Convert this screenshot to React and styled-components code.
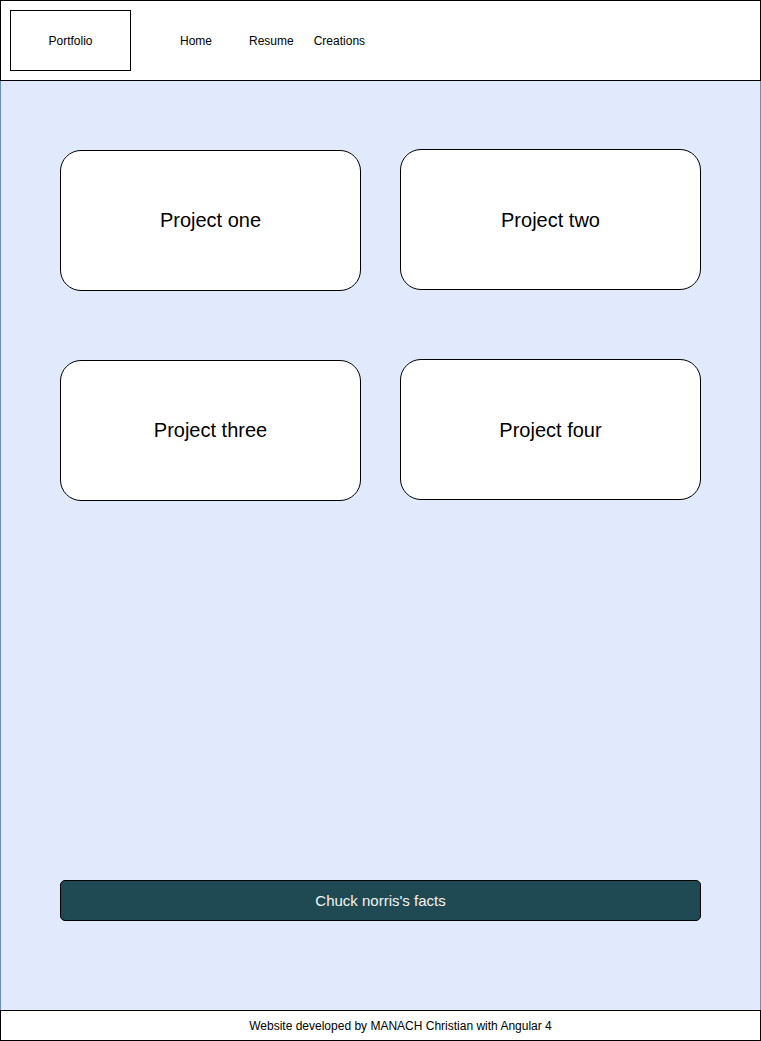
import React from 'react';
import styled, { createGlobalStyle } from 'styled-components';

const GlobalStyle = createGlobalStyle`
  html, body {
    margin: 0;
    padding: 0;
    background: #ffffff;
  }
  body {
    font-family: "Liberation Sans", Arial, sans-serif;
    color: #000;
  }
  * {
    box-sizing: border-box;
  }
`;

const Page = styled.div`
  width: 761px;
  display: flex;
  flex-direction: column;
`;

const Header = styled.header`
  height: 81px;
  border: 1px solid #000;
  background: #fff;
  display: flex;
  align-items: flex-start;
  padding: 9px 0 0 9px;
`;

const Brand = styled.div`
  width: 121px;
  height: 61px;
  border: 1px solid #000;
  display: flex;
  align-items: center;
  justify-content: center;
  font-size: 12px;
`;

const Nav = styled.nav`
  display: flex;
  align-items: center;
  height: 61px;
`;

const NavItem = styled.a`
  margin-left: ${(p) => p.$offset}px;
  font-size: 12px;
  color: #000;
  text-decoration: none;
  cursor: pointer;
`;

const Main = styled.main`
  height: 929px;
  background: #e0eafc;
  border-left: 1px solid #6c8ebf;
  border-right: 1px solid #6c8ebf;
  padding: 68px 0 89px 59px;
  display: flex;
  flex-direction: column;
`;

const Grid = styled.div`
  display: grid;
  grid-template-columns: 301px 301px;
  column-gap: 39px;
  row-gap: 68px;
`;

const Card = styled.div`
  height: 141px;
  margin-top: ${(p) => (p.$lower ? 1 : 0)}px;
  padding-top: ${(p) => (p.$lower ? 0 : 1)}px;
  background: #fff;
  border: 1px solid #000;
  border-radius: 21px;
  display: flex;
  align-items: center;
  justify-content: center;
  font-size: 20px;
`;

const FactsButton = styled.button`
  margin-top: auto;
  width: 641px;
  height: 41px;
  background: #1f4a54;
  color: #f4f4f4;
  border: 1px solid #000;
  border-radius: 5px;
  font-family: "Liberation Sans", Arial, sans-serif;
  font-size: 15px;
  cursor: pointer;
`;

const Footer = styled.footer`
  height: 31px;
  border: 1px solid #000;
  background: #fff;
  display: flex;
  align-items: center;
  justify-content: center;
  padding-left: 40px;
  font-size: 12px;
`;

const projects = [
  { id: 1, title: 'Project one', lower: true },
  { id: 2, title: 'Project two', lower: false },
  { id: 3, title: 'Project three', lower: true },
  { id: 4, title: 'Project four', lower: false },
];

const App = () => {
  return (
    <>
      <GlobalStyle />
      <Page>
        <Header>
          <Brand>Portfolio</Brand>
          <Nav>
            <NavItem $offset={49}>Home</NavItem>
            <NavItem $offset={37}>Resume</NavItem>
            <NavItem $offset={20}>Creations</NavItem>
          </Nav>
        </Header>
        <Main>
          <Grid>
            {projects.map((p) => (
              <Card key={p.id} $lower={p.lower}>
                {p.title}
              </Card>
            ))}
          </Grid>
          <FactsButton>Chuck norris's facts</FactsButton>
        </Main>
        <Footer>Website developed by MANACH Christian with Angular 4</Footer>
      </Page>
    </>
  );
};

export default App;
